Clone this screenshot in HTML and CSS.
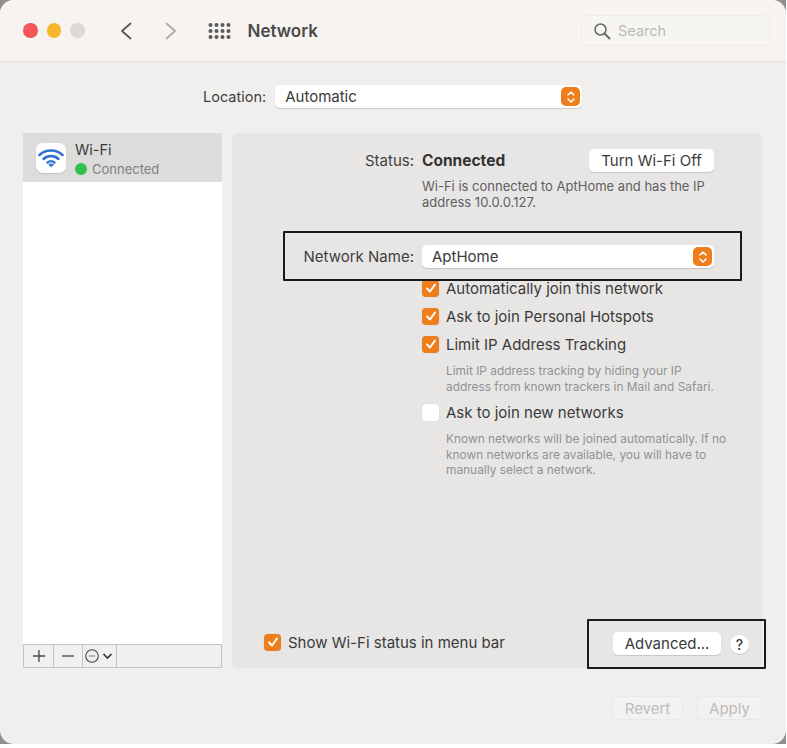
FILE: index.html
```html
<!DOCTYPE html>
<html lang="en">
<head>
<meta charset="utf-8">
<title>Network</title>
<link rel="stylesheet" href="styles.css">
</head>
<body>
<div class="window">
  <header class="titlebar">
    <div class="lights"><span class="light red"></span><span class="light yellow"></span><span class="light grey"></span></div>
    <svg class="nav nav-back" width="12" height="18" viewBox="0 0 12 18"><path d="M10.500 1.500 2 9l8.500 7.500" fill="none" stroke="#555" stroke-width="1.700" stroke-linecap="round" stroke-linejoin="round"/></svg>
    <svg class="nav nav-fwd" width="12" height="18" viewBox="0 0 12 18"><path d="M1.500 1.500 10 9l-8.500 7.500" fill="none" stroke="#aaa" stroke-width="1.700" stroke-linecap="round" stroke-linejoin="round"/></svg>
    <svg class="grid-icon" width="23" height="16" viewBox="0 0 23 16" fill="#5a5a5a">
      <circle cx="2.500" cy="2" r="2"/><circle cx="8.500" cy="2" r="2"/><circle cx="14.500" cy="2" r="2"/><circle cx="20.500" cy="2" r="2"/>
      <circle cx="2.500" cy="8" r="2"/><circle cx="8.500" cy="8" r="2"/><circle cx="14.500" cy="8" r="2"/><circle cx="20.500" cy="8" r="2"/>
      <circle cx="2.500" cy="14" r="2"/><circle cx="8.500" cy="14" r="2"/><circle cx="14.500" cy="14" r="2"/><circle cx="20.500" cy="14" r="2"/>
    </svg>
    <h1 class="title">Network</h1>
    <div class="search">
      <svg width="18" height="18" viewBox="0 0 18 18"><circle cx="7.500" cy="7.500" r="5.500" fill="none" stroke="#666" stroke-width="1.500"/><path d="m11.500 11.500 5 5" stroke="#666" stroke-width="1.800" stroke-linecap="round"/></svg>
      <span>Search</span>
    </div>
  </header>

  <div class="location">
    <span class="label">Location:</span>
    <div class="popup popup-location">
      <span>Automatic</span>
      <span class="stepper"><svg width="10" height="14" viewBox="0 0 10 14"><path d="M2 5 5 2l3 3M2 9l3 3 3-3" fill="none" stroke="#fff" stroke-width="1.500" stroke-linecap="round" stroke-linejoin="round"/></svg></span>
    </div>
  </div>

  <main class="content">
    <aside class="sidebar">
      <div class="service">
        <div class="wifi-tile">
          <svg width="26" height="20" viewBox="0 0 26 20" fill="none" stroke="#2d72cf" stroke-linecap="round"><path d="M1.500 7C7.500 1 18.500 1 24.500 7" stroke-width="2.500"/><path d="M5.500 11c4.300-4 10.700-4 15 0" stroke-width="2.500"/><path d="M9.500 14.500c2-1.500 5-1.500 7 0" stroke-width="2.300"/><path d="M13 18.500 10.800 16.500c1.200-.8 3.200-.8 4.400 0z" fill="#2d72cf" stroke-width="1"/></svg>
        </div>
        <div class="service-text">
          <div class="service-name">Wi-Fi</div>
          <div class="service-status"><span class="dot"></span>Connected</div>
        </div>
      </div>
      <div class="sidebar-space"></div>
      <div class="toolbar">
        <span class="tool tool-add"><svg width="14" height="14" viewBox="0 0 14 14"><path d="M7 1v12M1 7h12" stroke="#444" stroke-width="1.300"/></svg></span>
        <span class="tool tool-remove"><svg width="14" height="14" viewBox="0 0 14 14"><path d="M1 7h12" stroke="#444" stroke-width="1.300"/></svg></span>
        <span class="tool tool-more"><svg width="30" height="16" viewBox="0 0 30 16"><circle cx="7" cy="8" r="6.300" fill="none" stroke="#444" stroke-width="1.100"/><path d="M4 8h1.500M6.300 8h1.500M8.600 8h1.500" stroke="#444" stroke-width="1.100"/><path d="m18.500 6 4 4 4-4" fill="none" stroke="#333" stroke-width="1.700"/></svg></span>
        <span class="tool tool-rest"></span>
      </div>
    </aside>

    <section class="panel">
      <div class="status-row">
        <span class="row-label">Status:</span>
        <strong class="status-value">Connected</strong>
        <button class="btn btn-wifi">Turn Wi-Fi Off</button>
      </div>
      <p class="status-desc">Wi-Fi is connected to AptHome and has the IP<br>address 10.0.0.127.</p>
      <div class="name-row">
        <span class="row-label">Network Name:</span>
        <div class="popup popup-name">
          <span>AptHome</span>
          <span class="stepper"><svg width="10" height="14" viewBox="0 0 10 14"><path d="M2 5 5 2l3 3M2 9l3 3 3-3" fill="none" stroke="#fff" stroke-width="1.500" stroke-linecap="round" stroke-linejoin="round"/></svg></span>
        </div>
      </div>
      <div class="options">
        <label class="check-row"><span class="check on"><svg width="14" height="14" viewBox="0 0 14 14"><path d="m3 7.500 3 3 5-7" fill="none" stroke="#fff" stroke-width="2" stroke-linecap="round" stroke-linejoin="round"/></svg></span>Automatically join this network</label>
        <label class="check-row"><span class="check on"><svg width="14" height="14" viewBox="0 0 14 14"><path d="m3 7.500 3 3 5-7" fill="none" stroke="#fff" stroke-width="2" stroke-linecap="round" stroke-linejoin="round"/></svg></span>Ask to join Personal Hotspots</label>
        <label class="check-row"><span class="check on"><svg width="14" height="14" viewBox="0 0 14 14"><path d="m3 7.500 3 3 5-7" fill="none" stroke="#fff" stroke-width="2" stroke-linecap="round" stroke-linejoin="round"/></svg></span>Limit IP Address Tracking</label>
        <p class="hint hint-limit">Limit IP address tracking by hiding your IP<br>address from known trackers in Mail and Safari.</p>
        <label class="check-row"><span class="check"></span>Ask to join new networks</label>
        <p class="hint hint-new">Known networks will be joined automatically. If no<br>known networks are available, you will have to<br>manually select a network.</p>
      </div>
      <div class="panel-foot">
        <label class="check-row show-row"><span class="check on"><svg width="14" height="14" viewBox="0 0 14 14"><path d="m3 7.500 3 3 5-7" fill="none" stroke="#fff" stroke-width="2" stroke-linecap="round" stroke-linejoin="round"/></svg></span>Show Wi-Fi status in menu bar</label>
        <button class="btn btn-advanced">Advanced...</button>
        <span class="help">?</span>
      </div>
    </section>
  </main>

  <footer class="actions">
    <button class="btn-off btn-revert">Revert</button>
    <button class="btn-off btn-apply">Apply</button>
  </footer>

  <div class="callout callout-name"></div>
  <div class="callout callout-advanced"></div>
</div>
</body>
</html>
```

FILE: styles.css
```css
* { box-sizing: border-box; }
html, body { margin: 0; height: 100%; }
body {
  background: #fff;
  font-family: Inter, "Liberation Sans", sans-serif;
  font-size: 15px;
  color: #3a3a3a;
}
.window {
  position: relative;
  width: 786px;
  height: 744px;
  background: #f0efed;
  border-radius: 14px;
  box-shadow: 0 0 0 12px #8f8f8f;
  clip-path: inset(0);
  display: flex;
  flex-direction: column;
}
.titlebar {
  flex: none;
  height: 62px;
  background: #f6f3f0;
  border-bottom: 1px solid #e2e0dd;
  border-radius: 14px 14px 0 0;
  display: flex;
  align-items: center;
  padding-left: 23px;
}
.lights { display: flex; gap: 9px; }
.light { width: 14.500px; height: 14.500px; border-radius: 50%; }
.red { background: #f4575a; }
.yellow { background: #f8b62c; }
.grey { background: #dcdad8; }
.nav { flex: none; }
.nav-back { margin-left: 35px; }
.nav-fwd { margin-left: 33px; }
.grid-icon { margin-left: 31px; flex: none; }
.title { margin: 0 0 0 17px; font-size: 17px; font-weight: 600; color: #4a4a4a; }
.search {
  margin-left: auto;
  margin-right: 16px;
  width: 189px;
  height: 31px;
  border: 1px solid #efecea;
  border-radius: 6px;
  background: #f7f5f2;
  display: flex;
  align-items: center;
  gap: 7px;
  padding-left: 11px;
  font-size: 14.500px;
  color: #bcbaba;
}
.location {
  flex: none;
  height: 71px;
  padding: 23px 0 0 203px;
  display: flex;
  align-items: flex-start;
  gap: 9px;
}
.label { font-size: 14.500px; line-height: 23px; color: #3f3f3f; }
.popup {
  height: 23px;
  background: #fff;
  border-radius: 5px;
  box-shadow: 0 1px 1px rgba(0,0,0,.16);
  display: flex;
  align-items: center;
  justify-content: space-between;
  padding: 0 2px 0 10px;
  font-size: 15px;
  color: #3a3a3a;
}
.popup-location { width: 307px; }
.popup-name { width: 292px; }
.stepper {
  width: 19px;
  height: 19px;
  border-radius: 5px;
  background: #ee7d1c;
  display: flex;
  align-items: center;
  justify-content: center;
}
.content {
  flex: none;
  height: 535px;
  margin-left: 23px;
  display: flex;
  gap: 10px;
}
.sidebar {
  width: 199px;
  display: flex;
  flex-direction: column;
  background: #fff;
}
.service {
  height: 49px;
  flex: none;
  background: #dcdcdb;
  display: flex;
  align-items: center;
  padding-left: 13px;
  gap: 9px;
}
.wifi-tile {
  width: 30px;
  height: 30px;
  background: #fff;
  border-radius: 7px;
  box-shadow: 0 1px 1px rgba(0,0,0,.12);
  display: flex;
  align-items: center;
  justify-content: center;
}
.service-text { padding-top: 4px; }
.service-name { font-size: 14.500px; line-height: 18px; margin-bottom: 1px; color: #3a3a3a; }
.service-status { display: flex; align-items: center; gap: 5px; font-size: 13px; line-height: 18px; color: #808080; }
.dot { width: 12px; height: 12px; border-radius: 50%; background: #2fc14c; }
.sidebar-space { flex: 1; }
.toolbar {
  flex: none;
  height: 24px;
  display: flex;
  border: 1px solid #c5c4c3;
  background: #f1f0ee;
}
.tool { display: flex; align-items: center; justify-content: center; border-right: 1px solid #c5c4c3; }
.tool-add { width: 30px; }
.tool-remove { width: 29px; }
.tool-more { width: 34px; }
.tool-rest { flex: 1; border-right: 0; }
.panel {
  width: 530px;
  background: #e7e6e5;
  border-radius: 5px;
  padding-top: 16px;
  display: flex;
  flex-direction: column;
}
.status-row { display: flex; align-items: center; height: 23px; }
.row-label { width: 182px; text-align: right; margin-right: 8px; flex: none; font-size: 15px; color: #3f3f3f; }
.status-value { font-size: 15.500px; font-weight: 700; color: #333; }
.btn {
  border: 0;
  background: #fff;
  border-radius: 5px;
  box-shadow: 0 1px 1px rgba(0,0,0,.14);
  font: inherit;
  font-size: 15px;
  color: #3a3a3a;
  height: 23px;
  padding: 0;
}
.btn-wifi { width: 125px; margin-left: auto; margin-right: 48px; }
.status-desc {
  margin: 6px 0 0 190px;
  font-size: 13px;
  line-height: 16px;
  color: #5f5f5f;
}
.name-row { display: flex; align-items: center; height: 23px; margin-top: 35px; }
.options { margin: 6px 0 0 190px; }
.check-row {
  display: flex;
  align-items: center;
  gap: 7px;
  height: 28px;
  font-size: 15px;
  color: #3a3a3a;
}
.check {
  flex: none;
  width: 17px;
  height: 17px;
  border-radius: 4px;
  background: #fff;
  box-shadow: 0 0 1px rgba(0,0,0,.2);
  display: flex;
  align-items: center;
  justify-content: center;
}
.check.on { background: #ee7d1c; }
.hint {
  margin: 0 0 0 24px;
  font-size: 11.900px;
  line-height: 15.500px;
  color: #929292;
}
.hint-limit { margin-top: 5px; margin-bottom: 4px; }
.hint-new { margin-top: 5px; }
.panel-foot {
  margin-top: auto;
  height: 24px;
  margin-bottom: 14px;
  display: flex;
  align-items: center;
  padding-left: 32px;
}
.show-row { height: 24px; }
.btn-advanced { width: 108px; margin-left: auto; margin-top: 2px; }
.help {
  width: 19px;
  height: 19px;
  margin: 4px 13px 0 9px;
  border-radius: 50%;
  background: #fff;
  box-shadow: 0 1px 1px rgba(0,0,0,.14);
  display: flex;
  align-items: center;
  justify-content: center;
  font-size: 14px;
  font-weight: 500;
  color: #3a3a3a;
}
.actions {
  flex: 1;
  display: flex;
  justify-content: flex-end;
  align-items: flex-start;
  gap: 14px;
  padding: 28px 24px 0 0;
}
.btn-off {
  height: 24px;
  border: 1px solid #ebe9e7;
  border-radius: 5px;
  background: #f3f2f0;
  font: inherit;
  font-size: 15px;
  color: #bdbcbb;
  padding: 0;
}
.btn-revert { width: 71px; }
.btn-apply { width: 65px; }
.callout { position: absolute; border: 2px solid #1a1a1a; border-radius: 1px; pointer-events: none; }
.callout-name { left: 283px; top: 231px; width: 459px; height: 50px; }
.callout-advanced { left: 587px; top: 619px; width: 179px; height: 50px; }
```
